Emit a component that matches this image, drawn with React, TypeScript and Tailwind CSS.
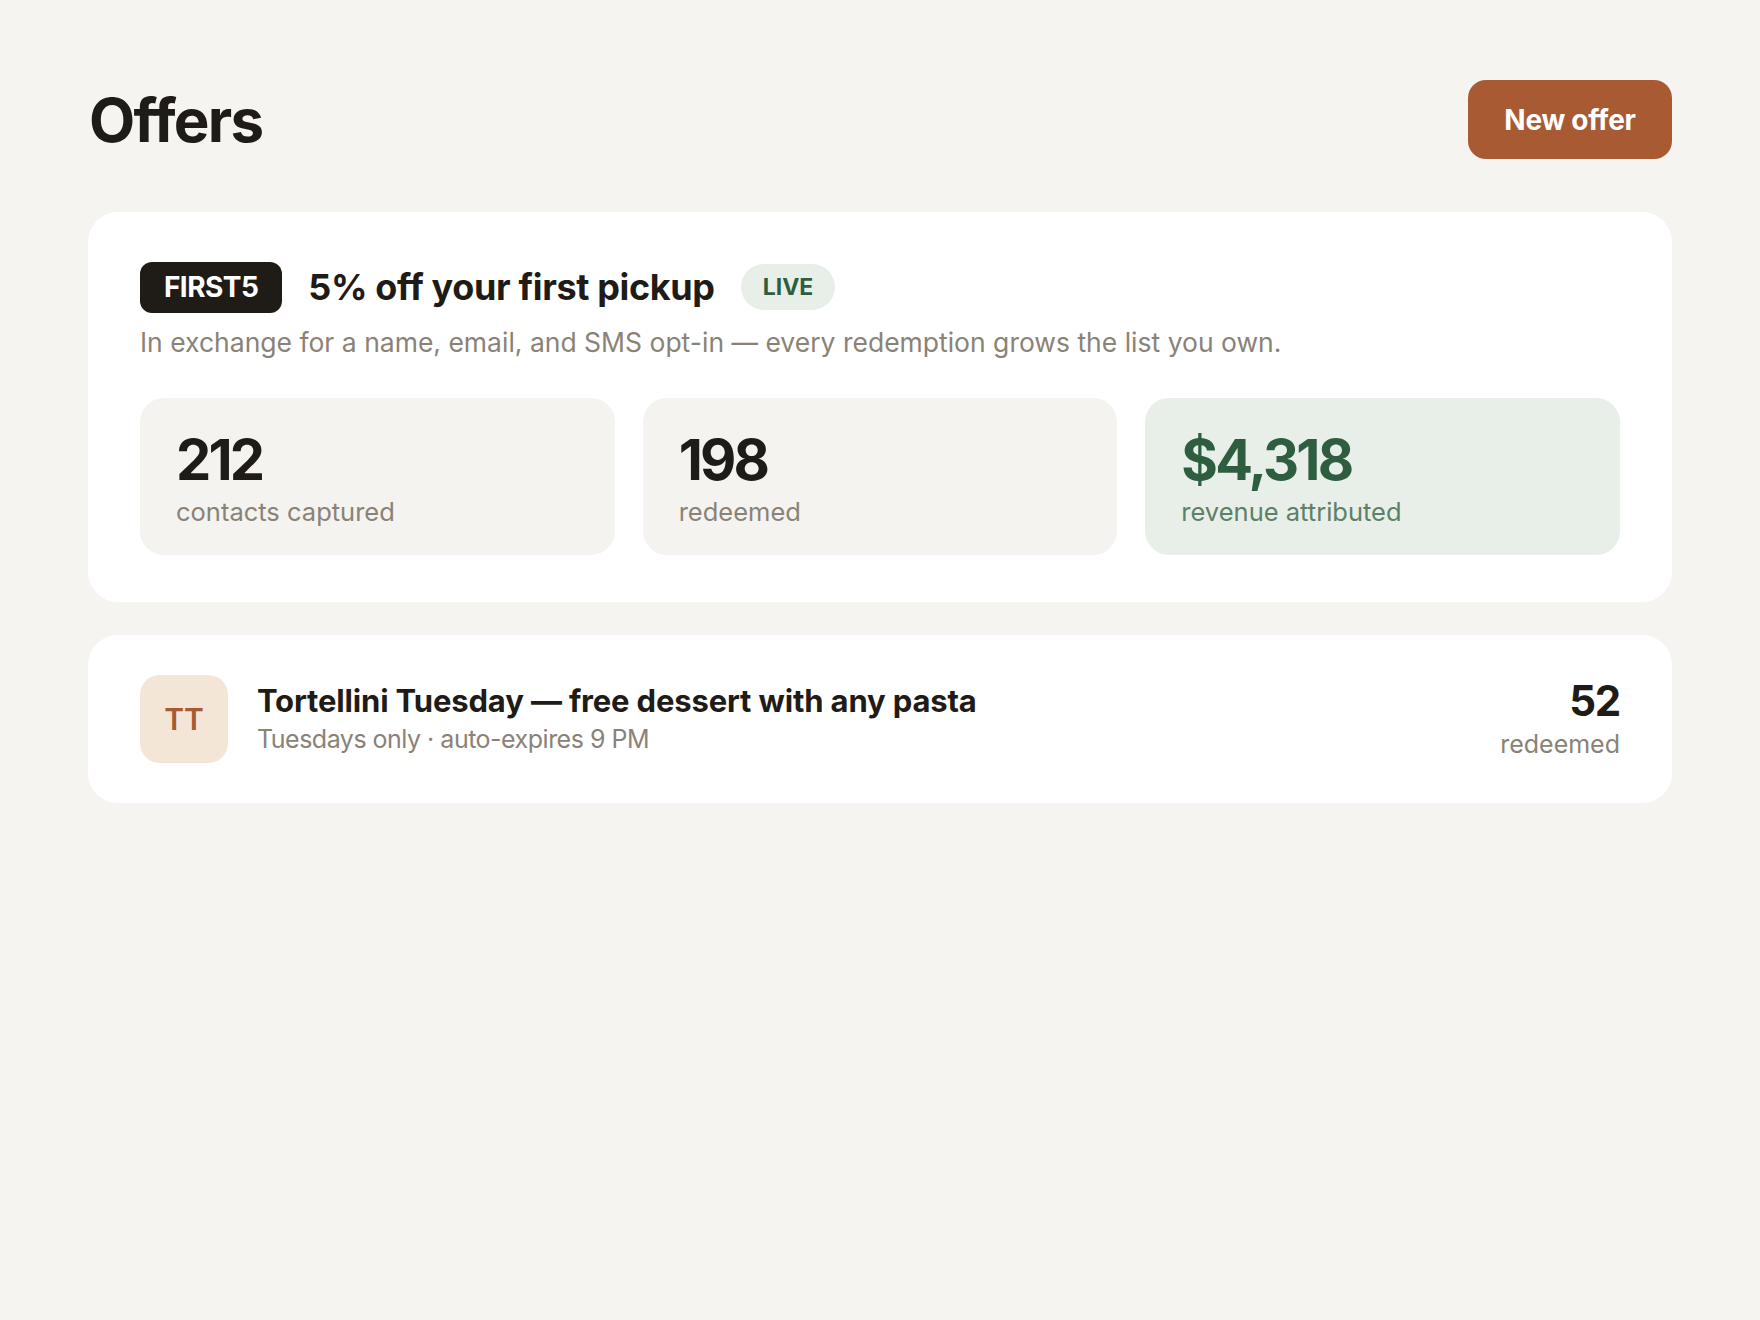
import React from "react";

function Stat({ value, label, green }: { value: string; label: string; green?: boolean }) {
  return (
    <div
      className={
        "flex h-[157px] flex-col rounded-[24px] px-[36px] pt-[34px] " +
        (green ? "bg-[#E7EFE8]" : "bg-[#F4F3EF]")
      }
    >
      <div
        className={
          "text-[56px] font-bold leading-none tracking-[-0.05em] " +
          (green ? "text-[#2E5E3F]" : "text-[#1F1B16]")
        }
      >
        {value}
      </div>
      <div
        className={
          "mt-[8px] text-[25.5px] leading-[32px] " + (green ? "text-[#5E7F68]" : "text-[#8A8277]")
        }
      >
        {label}
      </div>
    </div>
  );
}

export default function App() {
  return (
    <div className="min-h-screen bg-[#F5F4F0] px-[88px] pt-[80px] font-['Inter',sans-serif] text-[#1F1B16]">
      <div className="flex h-[79px] items-center justify-between">
        <h1 className="ml-[1px] text-[60px] font-bold leading-none tracking-[-0.03em]">Offers</h1>
        <button className="flex h-[79px] w-[204px] items-center justify-center rounded-[18px] bg-[#A85B33] text-[28px] font-bold tracking-[-0.01em] text-white">
          New offer
        </button>
      </div>

      <div className="mt-[53px] rounded-[30px] bg-white px-[52px] pb-[47px] pt-[48px]">
        <div className="flex items-center gap-[26px]">
          <div className="flex h-[51px] items-center rounded-[12px] bg-[#1F1B16] px-[24px] text-[28px] font-bold tracking-[-0.02em] text-white">
            FIRST5
          </div>
          <div className="text-[36px] font-bold tracking-[-0.01em]">5% off your first pickup</div>
          <div className="flex h-[46px] items-center rounded-full bg-[#E7EFE8] px-[22px] text-[23px] font-bold text-[#2E5E3F]">
            LIVE
          </div>
        </div>
        <p className="mt-[11px] text-[26.5px] leading-[34px] text-[#8A8277]">
          In exchange for a name, email, and SMS opt-in — every redemption grows the list you own.
        </p>
        <div className="mt-[39px] grid grid-cols-3 gap-[28px]">
          <Stat value="212" label="contacts captured" />
          <Stat value="198" label="redeemed" />
          <Stat value="$4,318" label="revenue attributed" green />
        </div>
      </div>

      <div className="mt-[33px] flex items-center gap-[29px] rounded-[30px] bg-white px-[52px] py-[40px]">
        <div className="flex h-[88px] w-[88px] shrink-0 items-center justify-center rounded-[20px] bg-[#F3E6D7] text-[30px] font-semibold text-[#A85A32]">
          TT
        </div>
        <div className="flex-1">
          <div className="text-[31px] font-bold leading-[38px] tracking-[-0.005em]">
            Tortellini Tuesday — free dessert with any pasta
          </div>
          <div className="mt-[2px] text-[25px] leading-[34px] tracking-[-0.02em] text-[#8A8277]">
            Tuesdays only · auto-expires 9 PM
          </div>
        </div>
        <div className="text-right">
          <div className="text-[42px] font-bold leading-[46px] tracking-[-0.03em]">52</div>
          <div className="mt-[3px] text-[25px] leading-[34px] text-[#8A8277]">redeemed</div>
        </div>
      </div>
    </div>
  );
}
